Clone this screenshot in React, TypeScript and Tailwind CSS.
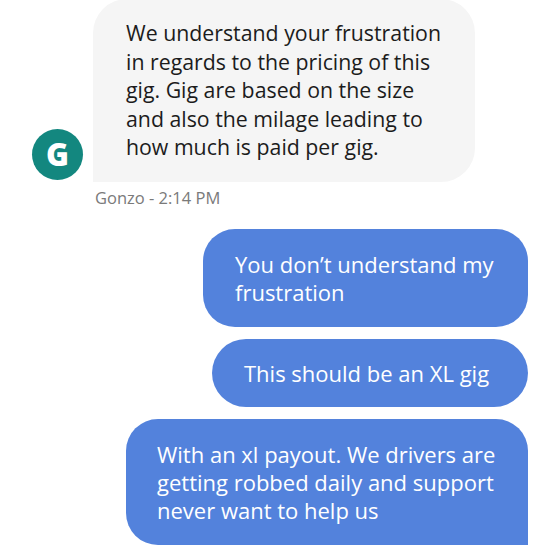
import React from 'react';

const font = { fontFamily: '"Open Sans", "Noto Sans", sans-serif' };

const Lines = ({ lines }: { lines: string[] }) => (
  <>
    {lines.map((l, i) => (
      <div key={i} className="whitespace-nowrap">{l}</div>
    ))}
  </>
);

const App = () => {
  return (
    <div className="w-[560px] h-[560px] bg-white overflow-hidden" style={font}>
      <div className="flex items-end pl-[32px] -mt-[1px]">
        <div className="w-[51px] h-[51px] rounded-full bg-[#13877f] flex items-center justify-center text-white text-[31px] font-extrabold leading-none mb-[2px]">
          G
        </div>
        <div className="ml-[10px] w-[382px] bg-[#f5f5f5] rounded-[34px] rounded-bl-none pl-[33px] pr-[20px] py-[20px] text-[21.3px] leading-[28.5px] text-[#1c1c1c]">
          <Lines
            lines={[
              'We understand your frustration',
              'in regards to the pricing of this',
              'gig. Gig are based on the size',
              'and also the milage leading to',
              'how much is paid per gig.',
            ]}
          />
        </div>
      </div>
      <div className="pl-[95px] mt-[6px] text-[16.5px] leading-[20px] text-[#7a7a7a]">Gonzo - 2:14 PM</div>

      <div className="flex flex-col items-end pr-[32px] mt-[21px] gap-[12px] text-white text-[22px] leading-[28px]">
        <div className="w-[325px] bg-[#5382dc] rounded-[32px] pl-[32px] pr-[20px] py-[21px]">
          <Lines lines={['You don’t understand my', 'frustration']} />
        </div>
        <div className="w-[316px] bg-[#5382dc] rounded-[34px] pl-[32px] pr-[20px] py-[20px]">
          This should be an XL gig
        </div>
        <div className="w-[402px] bg-[#5382dc] rounded-[32px] rounded-br-none pl-[31px] pr-[20px] py-[21px]">
          <Lines
            lines={[
              'With an xl payout. We drivers are',
              'getting robbed daily and support',
              'never want to help us',
            ]}
          />
        </div>
      </div>
    </div>
  );
};

export default App;
